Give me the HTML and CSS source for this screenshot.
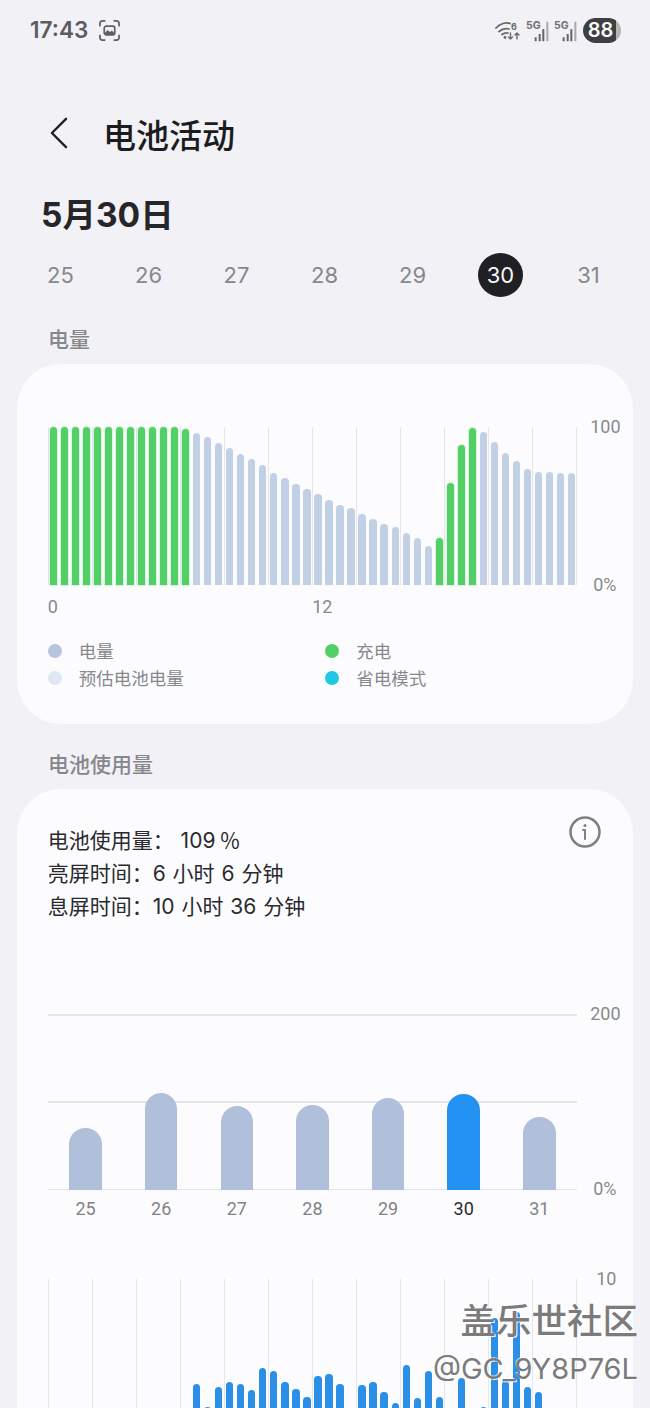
FILE: index.html
```html
<!DOCTYPE html>
<html lang="zh">
<head>
<meta charset="utf-8">
<title>电池活动</title>
<link rel="stylesheet" href="styles.css">
</head>
<body>
<div class="page">
  <div class="status">
    <div class="status-left">
      <span class="time">17:43</span>
      <svg class="shot" viewBox="0 0 22 22" fill="none" stroke="#5f5f63" stroke-width="1.8" stroke-linecap="round"><path d="M1 6V3.5A2.5 2.5 0 0 1 3.5 1H6M16 1h2.500A2.500 2.500 0 0 1 21 3.500V6M21 16v2.500a2.500 2.500 0 0 1-2.500 2.500H16M6 21H3.500A2.500 2.500 0 0 1 1 18.500V16"/><rect x="5.500" y="6.500" width="11" height="9" rx="2"/><path d="M6 14l3-3.500 2.500 2 2-1.500 2.500 2.500V15H6z" fill="#5f5f63" stroke="none"/></svg>
    </div>
    <div class="status-right">
      <svg class="wifi" viewBox="0 0 26 24" fill="none" stroke="#6a6a6e" stroke-width="1.800" stroke-linecap="round"><path d="M1 10C5 5.500 11 4 15 5.500M4 13.500C7 11 10.500 10 14 11M7 16.500C9 15 11 14.500 13 15"/><circle cx="10" cy="19.500" r="1.400" fill="#6a6a6e" stroke="none"/><path d="M15.500 15v6m-2-2 2 2 2-2M22 21v-6m-2 2 2-2 2 2" stroke-width="1.400"/><text x="16" y="12" class="wifi-six">6</text></svg>
      <div class="sim"><span class="sim-label">5G</span><svg class="signal" viewBox="0 0 19 26"><path d="M1 20h2.500v5H1zM6 16h2.500v9H6z" fill="#66666a"/><path d="M10.500 10H13v15h-2.500z" fill="#66666a"/><path d="M15.500 1H18v24h-2.500z" fill="#a9a9ad"/></svg></div>
      <div class="sim"><span class="sim-label">5G</span><svg class="signal" viewBox="0 0 19 26"><path d="M1 20h2.500v5H1zM6 16h2.500v9H6z" fill="#66666a"/><path d="M10.500 10H13v15h-2.500z" fill="#66666a"/><path d="M15.500 1H18v24h-2.500z" fill="#a9a9ad"/></svg></div>
      <div class="battery"><span class="battery-level">88</span></div>
    </div>
  </div>

  <header class="header">
    <svg class="back" viewBox="0 0 20 34" fill="none" stroke="#222226" stroke-width="2.600" stroke-linecap="round" stroke-linejoin="round"><path d="M18 2 3 17l15 15"/></svg>
    <h1 class="title">电池活动</h1>
  </header>

  <div class="date-title">5月30日</div>
  <div class="date-row">
    <span class="date">25</span><span class="date">26</span><span class="date">27</span><span class="date">28</span><span class="date">29</span><span class="date date-active">30</span><span class="date">31</span>
  </div>

  <h2 class="section">电量</h2>
  <section class="card card-level">
    <div class="plot-row">
      <div class="plot plot-bars">
        <div class="vlines"><i></i><i></i><i></i><i></i><i></i><i></i><i></i><i></i><i></i><i></i><i></i><i></i><i></i></div>
        <div class="bars">
          <span class="slot"><b class="bar green" style="height:158px"></b></span>
          <span class="slot"><b class="bar green" style="height:158px"></b></span>
          <span class="slot"><b class="bar green" style="height:158px"></b></span>
          <span class="slot"><b class="bar green" style="height:158px"></b></span>
          <span class="slot"><b class="bar green" style="height:158px"></b></span>
          <span class="slot"><b class="bar green" style="height:158px"></b></span>
          <span class="slot"><b class="bar green" style="height:158px"></b></span>
          <span class="slot"><b class="bar green" style="height:158px"></b></span>
          <span class="slot"><b class="bar green" style="height:158px"></b></span>
          <span class="slot"><b class="bar green" style="height:158px"></b></span>
          <span class="slot"><b class="bar green" style="height:158px"></b></span>
          <span class="slot"><b class="bar green" style="height:158px"></b></span>
          <span class="slot"><b class="bar green" style="height:156px"></b></span>
          <span class="slot"><b class="bar pale" style="height:152px"></b></span>
          <span class="slot"><b class="bar pale" style="height:148px"></b></span>
          <span class="slot"><b class="bar pale" style="height:142px"></b></span>
          <span class="slot"><b class="bar pale" style="height:137px"></b></span>
          <span class="slot"><b class="bar pale" style="height:131px"></b></span>
          <span class="slot"><b class="bar pale" style="height:126px"></b></span>
          <span class="slot"><b class="bar pale" style="height:120px"></b></span>
          <span class="slot"><b class="bar pale" style="height:112px"></b></span>
          <span class="slot"><b class="bar pale" style="height:107px"></b></span>
          <span class="slot"><b class="bar pale" style="height:101px"></b></span>
          <span class="slot"><b class="bar pale" style="height:96px"></b></span>
          <span class="slot"><b class="bar pale" style="height:91px"></b></span>
          <span class="slot"><b class="bar pale" style="height:85px"></b></span>
          <span class="slot"><b class="bar pale" style="height:80px"></b></span>
          <span class="slot"><b class="bar pale" style="height:77px"></b></span>
          <span class="slot"><b class="bar pale" style="height:71px"></b></span>
          <span class="slot"><b class="bar pale" style="height:66px"></b></span>
          <span class="slot"><b class="bar pale" style="height:61px"></b></span>
          <span class="slot"><b class="bar pale" style="height:58px"></b></span>
          <span class="slot"><b class="bar pale" style="height:52px"></b></span>
          <span class="slot"><b class="bar pale" style="height:47px"></b></span>
          <span class="slot"><b class="bar pale" style="height:39px"></b></span>
          <span class="slot"><b class="bar green" style="height:47px"></b></span>
          <span class="slot"><b class="bar green" style="height:102px"></b></span>
          <span class="slot"><b class="bar green" style="height:140px"></b></span>
          <span class="slot"><b class="bar green" style="height:157px"></b></span>
          <span class="slot"><b class="bar pale" style="height:153px"></b></span>
          <span class="slot"><b class="bar pale" style="height:143px"></b></span>
          <span class="slot"><b class="bar pale" style="height:132px"></b></span>
          <span class="slot"><b class="bar pale" style="height:124px"></b></span>
          <span class="slot"><b class="bar pale" style="height:116px"></b></span>
          <span class="slot"><b class="bar pale" style="height:113px"></b></span>
          <span class="slot"><b class="bar pale" style="height:113px"></b></span>
          <span class="slot"><b class="bar pale" style="height:112px"></b></span>
          <span class="slot"><b class="bar pale" style="height:112px"></b></span>
        </div>
      </div>
      <div class="yaxis yaxis-level"><span>100</span><span>0%</span></div>
    </div>
    <div class="xaxis"><span>0</span><span>12</span></div>
    <div class="legend">
      <div class="legend-item"><i class="dot dot-level"></i>电量</div>
      <div class="legend-item"><i class="dot dot-charge"></i>充电</div>
      <div class="legend-item"><i class="dot dot-estimate"></i>预估电池电量</div>
      <div class="legend-item"><i class="dot dot-saver"></i>省电模式</div>
    </div>
  </section>

  <h2 class="section section-usage">电池使用量</h2>
  <section class="card card-usage">
    <div class="usage-head">
      <div class="usage-text">
        <p>电池使用量： 109<span class="pct">％</span></p>
        <p>亮屏时间：6 小时 6 分钟</p>
        <p>息屏时间：10 小时 36 分钟</p>
      </div>
      <svg class="info" viewBox="0 0 32 32" fill="none" stroke="#808084" stroke-width="2.500"><circle cx="16" cy="16" r="14.500"/><path d="M14 14h2v9" stroke-width="2" stroke-linecap="round" stroke-linejoin="round"/><circle cx="16" cy="9.500" r="1.500" fill="#808084" stroke="none"/></svg>
    </div>

    <div class="plot-row plot-row-days">
      <div class="plot plot-days">
        <div class="hlines"><i></i><i></i><i></i></div>
        <div class="day-bars">
          <span class="day-slot"><b class="day-bar" style="height:62px"></b></span>
          <span class="day-slot"><b class="day-bar" style="height:97px"></b></span>
          <span class="day-slot"><b class="day-bar" style="height:84px"></b></span>
          <span class="day-slot"><b class="day-bar" style="height:85px"></b></span>
          <span class="day-slot"><b class="day-bar" style="height:92px"></b></span>
          <span class="day-slot"><b class="day-bar day-bar-active" style="height:96px"></b></span>
          <span class="day-slot"><b class="day-bar" style="height:73px"></b></span>
        </div>
      </div>
      <div class="yaxis yaxis-days"><span>200</span><span>0%</span></div>
    </div>
    <div class="day-labels"><span>25</span><span>26</span><span>27</span><span>28</span><span>29</span><span class="day-label-active">30</span><span>31</span></div>

    <div class="plot-row plot-row-hours">
      <div class="plot plot-bars">
        <div class="vlines"><i></i><i></i><i></i><i></i><i></i><i></i><i></i><i></i><i></i><i></i><i></i><i></i><i></i></div>
        <div class="bars">
          <span class="slot"></span><span class="slot"></span><span class="slot"></span><span class="slot"></span><span class="slot"></span><span class="slot"></span><span class="slot"></span><span class="slot"></span><span class="slot"></span><span class="slot"></span><span class="slot"></span><span class="slot"></span><span class="slot"></span>
          <span class="slot"><b class="bar blue" style="height:53px"></b></span>
          <span class="slot"><b class="bar blue" style="height:30px"></b></span>
          <span class="slot"><b class="bar blue" style="height:50px"></b></span>
          <span class="slot"><b class="bar blue" style="height:55px"></b></span>
          <span class="slot"><b class="bar blue" style="height:53px"></b></span>
          <span class="slot"><b class="bar blue" style="height:47px"></b></span>
          <span class="slot"><b class="bar blue" style="height:69px"></b></span>
          <span class="slot"><b class="bar blue" style="height:66px"></b></span>
          <span class="slot"><b class="bar blue" style="height:55px"></b></span>
          <span class="slot"><b class="bar blue" style="height:48px"></b></span>
          <span class="slot"><b class="bar blue" style="height:40px"></b></span>
          <span class="slot"><b class="bar blue" style="height:61px"></b></span>
          <span class="slot"><b class="bar blue" style="height:63px"></b></span>
          <span class="slot"><b class="bar blue" style="height:53px"></b></span>
          <span class="slot"></span>
          <span class="slot"><b class="bar blue" style="height:52px"></b></span>
          <span class="slot"><b class="bar blue" style="height:55px"></b></span>
          <span class="slot"><b class="bar blue" style="height:45px"></b></span>
          <span class="slot"><b class="bar blue" style="height:34px"></b></span>
          <span class="slot"><b class="bar blue" style="height:72px"></b></span>
          <span class="slot"><b class="bar blue" style="height:39px"></b></span>
          <span class="slot"><b class="bar blue" style="height:66px"></b></span>
          <span class="slot"><b class="bar blue" style="height:40px"></b></span>
          <span class="slot"></span>
          <span class="slot"><b class="bar blue" style="height:59px"></b></span>
          <span class="slot"></span>
          <span class="slot"><b class="bar blue" style="height:30px"></b></span>
          <span class="slot"><b class="bar blue" style="height:119px"></b></span>
          <span class="slot"><b class="bar blue" style="height:56px"></b></span>
          <span class="slot"><b class="bar blue" style="height:125px"></b></span>
          <span class="slot"><b class="bar blue" style="height:50px"></b></span>
          <span class="slot"><b class="bar blue" style="height:45px"></b></span>
          <span class="slot"></span><span class="slot"></span><span class="slot"></span>
        </div>
      </div>
      <div class="yaxis yaxis-hours"><span>10</span></div>
    </div>
  </section>

  <div class="watermark">
    <div class="wm-title">盖乐世社区</div>
    <div class="wm-id">@GC_9Y8P76L</div>
  </div>
</div>
</body>
</html>
```

FILE: styles.css
```css
* { box-sizing: border-box; }
html, body { margin: 0; padding: 0; height: 1408px; overflow: hidden; }
body { background: #f1f1f6; font-family: Inter, "Noto Sans CJK SC", sans-serif; color: #222226; }

.page { position: relative; width: 650px; height: 1408px; overflow: hidden; }

/* status bar */
.status { display: flex; justify-content: space-between; align-items: center; height: 24px; margin-top: 18px; padding: 0 29px 0 30px; }
.status-left { display: flex; align-items: center; gap: 11px; }
.time { font-size: 22.500px; font-weight: 600; color: #5c5c60; line-height: 24px; }
.shot { width: 21px; height: 21px; }
.status-right { display: flex; align-items: center; }
.wifi { width: 26px; height: 24px; margin-right: 5px; overflow: visible; }
.wifi-six { font: 700 9px Inter, sans-serif; fill: #6a6a6e; stroke: none; }
.sim { position: relative; width: 28px; height: 24px; }
.sim-label { position: absolute; left: 0; top: 1px; font-size: 10.500px; font-weight: 700; line-height: 13px; color: #707074; }
.signal { position: absolute; right: 4px; top: 3px; width: 17px; height: 21px; }
.battery { display: flex; align-items: center; justify-content: center; width: 38px; height: 25px; margin-left: 1px; border-radius: 13px; background: linear-gradient(90deg, #3f3f43 0, #3f3f43 86%, #b4b4b7 86%); }
.battery-level { font-size: 20px; font-weight: 600; color: #fafafa; line-height: 25px; margin-right: 3px; }

/* header */
.header { display: flex; align-items: center; height: 44px; margin-top: 72px; padding-left: 49px; }
.back { width: 19px; height: 32px; margin-bottom: 7px; }
.title { margin: 0 0 0 35px; font-size: 33px; font-weight: 500; line-height: 44px; color: #1c1c20; }
.date-title { margin: 34px 0 0 41px; font-size: 33.500px; font-weight: 700; line-height: 46px; color: #26262a; }
.date-row { display: flex; justify-content: space-between; height: 44px; margin: 15px 39px 0 38px; }
.date { display: flex; align-items: center; justify-content: center; width: 45px; height: 44px; border-radius: 50%; font-size: 22px; color: #88888c; }
.date-active { background: #202024; color: #f6f6f8; }

/* sections */
.section { margin: 30px 0 0 48px; font-size: 21px; font-weight: 500; line-height: 26px; color: #87878b; }
.section-usage { margin-top: 28px; }
.card { margin: 11px 17px 0; background: #fcfcff; border-radius: 44px; }
.card-level { height: 360px; padding: 63px 0 0 30.700px; }
.card-usage { height: 760px; padding: 35px 0 0 30.700px; }

/* charts */
.plot-row { display: flex; }
.plot { position: relative; flex: none; width: 529.500px; }
.plot-bars { height: 158px; }
.vlines { position: absolute; inset: 0; display: flex; justify-content: space-between; }
.vlines i { width: 1.500px; background: #e5e5eb; }
.bars { position: relative; display: flex; height: 100%; }
.slot { flex: 1; display: flex; align-items: flex-end; justify-content: center; }
.bar { display: block; width: 7.300px; border-radius: 3.650px 3.650px 0 0; }
.green { background: #53d065; box-shadow: 0 0 1px 1px rgba(83, 208, 101, .22); }
.pale { background: #c1d0e4; }
.blue { background: #2b8fe8; }

.yaxis { display: flex; flex-direction: column; justify-content: space-between; margin-left: 13px; font-family: Roboto, sans-serif; font-size: 18px; line-height: 20px; color: #88888c; }
.yaxis-level { height: 178px; margin-top: -10px; }
.yaxis-level span:last-child { margin-left: 3px; }
.yaxis-days { height: 195px; margin-top: -10px; }
.yaxis-days span:last-child { margin-left: 3px; }
.yaxis-hours { margin-left: 19px; margin-top: -10px; }

.xaxis { display: grid; grid-template-columns: 264.500px 1fr; margin-top: 2px; font-family: Roboto, sans-serif; font-size: 18px; line-height: 20px; color: #88888c; }

.legend { display: grid; grid-template-columns: 277.500px 1fr; grid-auto-rows: 27px; margin: 20px 0 0; font-size: 17.500px; color: #88888c; }
.legend-item { display: flex; align-items: center; }
.dot { width: 14px; height: 14px; margin-right: 17px; border-radius: 50%; }
.dot-level { background: #b7c5de; }
.dot-estimate { background: #e0e6f2; }
.dot-charge { background: #53d065; }
.dot-saver { background: #20c8e3; }

.usage-head { display: flex; justify-content: space-between; padding-right: 32px; }
.usage-text p { margin: 0; font-size: 21px; line-height: 33px; color: #2a2a2e; word-spacing: 1px; }
.pct { margin-left: 4px; }
.info { width: 32px; height: 32px; margin-top: -8px; }

.plot-row-days { margin-top: 91px; }
.plot-days { height: 176px; }
.hlines { position: absolute; inset: 0; display: flex; flex-direction: column; justify-content: space-between; }
.hlines i { height: 1.500px; background: #e5e5ee; }
.day-bars { position: relative; display: flex; height: 100%; }
.day-slot { flex: 1; display: flex; align-items: flex-end; justify-content: center; }
.day-bar { display: block; width: 32.500px; border-radius: 16.250px 16.250px 0 0; background: #b0c0da; }
.day-bar-active { background: #2492f3; }
.day-labels { display: flex; width: 529.500px; margin-top: -1px; font-family: Roboto, sans-serif; font-size: 18px; line-height: 22px; color: #828286; }
.day-labels span { flex: 1; text-align: center; }
.day-labels .day-label-active { color: #2a2a2e; }

.plot-row-hours { margin-top: 59px; }

/* watermark */
.watermark { position: absolute; right: 12px; top: 1302px; display: flex; flex-direction: column; align-items: flex-end; color: #7b7b7b; text-shadow: 1px 1px 0 rgba(255,255,255,.9), -1px -1px 0 rgba(255,255,255,.6); }
.wm-title { font-size: 35.500px; font-weight: 500; line-height: 40px; }
.wm-id { font-size: 29px; line-height: 34px; margin-top: 10px; font-family: Inter, sans-serif; }
```
